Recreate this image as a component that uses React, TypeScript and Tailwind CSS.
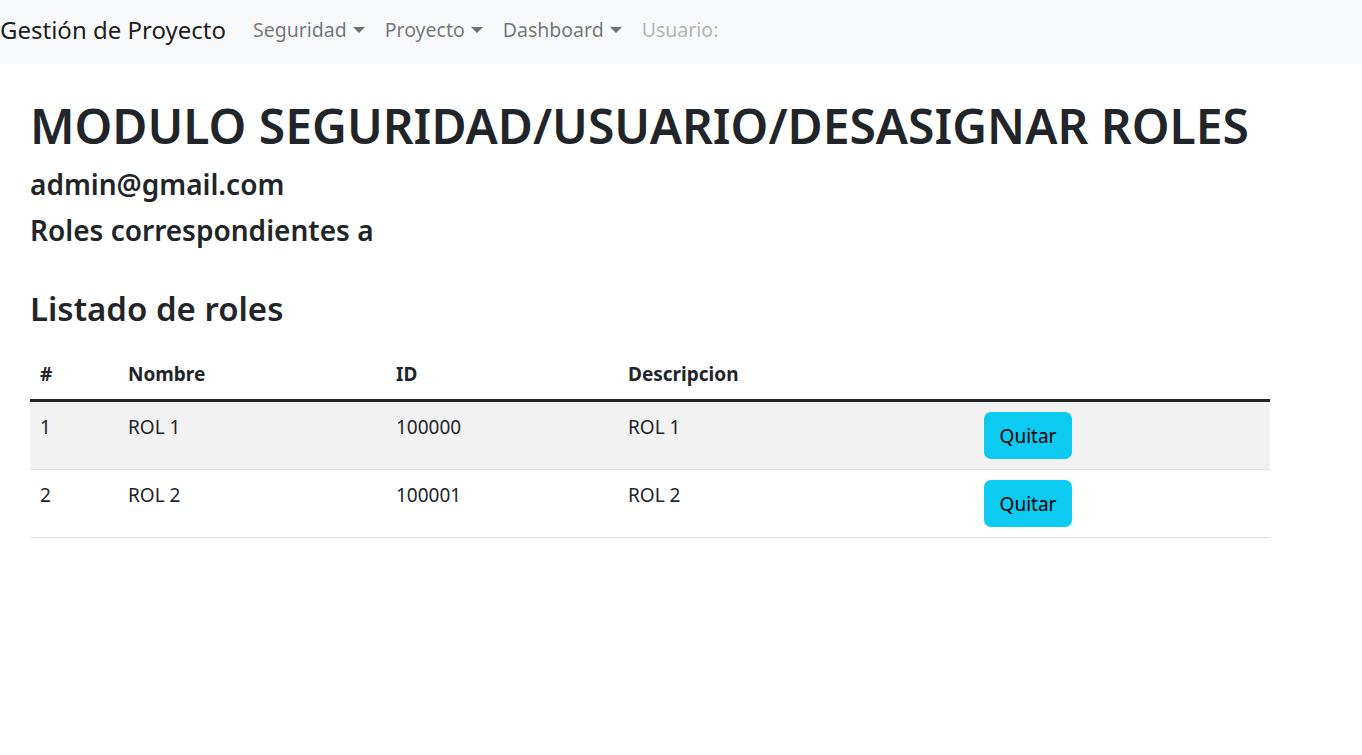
import React from 'react'

const roles = [
  { n: 1, nombre: 'ROL 1', id: '100000', desc: 'ROL 1' },
  { n: 2, nombre: 'ROL 2', id: '100001', desc: 'ROL 2' },
]

const menus = ['Seguridad', 'Proyecto', 'Dashboard']

function Caret() {
  return (
    <span className="ml-[6px] inline-block align-[4px] border-t-[6px] border-x-[6px] border-t-current border-x-transparent" />
  )
}

export default function App() {
  return (
    <div className="min-h-screen bg-white text-[#212529] font-['Segoe_UI','Noto_Sans',sans-serif]">
      {/* Navbar */}
      <nav className="flex h-[64px] items-center bg-[#f8f9fa] pb-[4px]">
        <span className="mr-[17px] text-[24px] text-black/90">Gestión de Proyecto</span>
        <ul className="flex items-center text-[19.5px] text-black/55">
          {menus.map((m) => (
            <li key={m} className="px-[10px]">
              {m}
              <Caret />
            </li>
          ))}
          <li className="px-[10px] text-black/30">Usuario:</li>
        </ul>
      </nav>

      {/* Content */}
      <main className="px-[30px] pt-[32px]">
        <h1 className="mb-[10px] text-[48px] leading-[60px] font-semibold">MODULO SEGURIDAD/USUARIO/DESASIGNAR ROLES</h1>
        <h4 className="mb-[10px] text-[28px] leading-[36px] font-semibold">admin@gmail.com</h4>
        <h4 className="mb-[10px] text-[28px] leading-[36px] font-semibold">Roles correspondientes a</h4>

        <h3 className="mt-[40px] mb-[19px] text-[33px] leading-[42px] font-semibold">Listado de roles</h3>

        <table className="w-[1240px] border-collapse text-[19px] leading-[30px]">
          <thead>
            <tr className="border-b-[3px] border-[#212529] text-left font-bold">
              <th className="w-[88px] p-[10px]">#</th>
              <th className="w-[268px] p-[10px]">Nombre</th>
              <th className="w-[232px] p-[10px]">ID</th>
              <th className="w-[356px] p-[10px]">Descripcion</th>
              <th className="p-[10px]"></th>
            </tr>
          </thead>
          <tbody>
            {roles.map((r, i) => (
              <tr key={r.n} className={`border-b border-[#dee2e6] align-top ${i % 2 === 0 ? 'bg-[#f2f2f2]' : 'bg-white'}`}>
                <td className="p-[10px]">{r.n}</td>
                <td className="p-[10px]">{r.nombre}</td>
                <td className="p-[10px]">{r.id}</td>
                <td className="p-[10px]">{r.desc}</td>
                <td className="p-[10px]">
                  <button className="h-[47px] w-[88px] rounded-[7px] bg-[#0dcaf0] text-[19px] text-black">Quitar</button>
                </td>
              </tr>
            ))}
          </tbody>
        </table>
      </main>
    </div>
  )
}
